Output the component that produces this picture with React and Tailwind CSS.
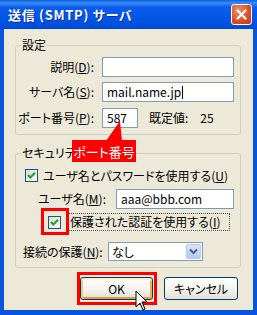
import React from "react";

const font = "font-['Noto_Sans_CJK_JP','Noto_Sans',sans-serif] [font-feature-settings:'palt']";

const Check = () => (
  <div className="w-[13px] h-[13px] border border-[#1C5180] bg-gradient-to-br from-[#DCDCD7] to-white flex items-center justify-center shrink-0">
    <svg width="11" height="11" viewBox="0 0 11 11">
      <polyline points="2,5 4.3,7.5 9,2.8" fill="none" stroke="#21A121" strokeWidth="2.2" />
    </svg>
  </div>
);

const Field = ({ className = "", children }) => (
  <div className={`h-[20px] border border-[#7F9DB9] bg-white px-[4px] flex items-center ${className}`}>
    {children}
  </div>
);

const Button = ({ children, isDefault, className = "" }) => (
  <div
    className={`h-[23px] rounded-[3px] border border-[#003C74] bg-gradient-to-b from-white via-[#F5F4EF] to-[#E3E1D6] flex items-center justify-center text-[12px] ${
      isDefault ? "shadow-[inset_0_2px_0_#FFF0CF,inset_2px_0_0_#F9C86A,inset_-2px_0_0_#F3B33F,inset_0_-2px_0_#E5973B]" : ""
    } ${className}`}
  >
    {children}
  </div>
);

export default function App() {
  return (
    <div className={`relative w-[257px] h-[315px] flex flex-col bg-[#0855DD] ${font} text-black`}>
      {/* Title bar */}
      <div className="h-[29px] flex items-center pl-[8px] pr-[5px] bg-[linear-gradient(to_bottom,#0A61E0_0%,#3A8BF6_10%,#0A5CEC_25%,#0055E5_70%,#0049D8_100%)]">
        <span className="text-white font-bold text-[13px] leading-none tracking-[0.7px] [text-shadow:1px_1px_0_#0A2AA0]">
          送信 (SMTP) サーバ
        </span>
        <div className="ml-auto w-[21px] h-[21px] rounded-[3px] border border-white bg-[radial-gradient(circle_at_35%_30%,#F0906A,#DD4A22_60%,#C23A18)] flex items-center justify-center">
          <svg width="11" height="11" viewBox="0 0 11 11">
            <path d="M1.5 1.5 L9.5 9.5 M9.5 1.5 L1.5 9.5" stroke="white" strokeWidth="2.2" strokeLinecap="square" />
          </svg>
        </div>
      </div>

      {/* Body */}
      <div className="flex-1 mx-[4px] mb-[5px] bg-[#ECE9D8] pt-[9px] px-[11px] text-[12px] leading-[14px]">
        {/* 設定 */}
        <fieldset className="w-[226px] border border-[#D0D0BF] rounded-[3px] pt-[5px] pb-[6px]">
          <legend className="ml-[5px] px-[1px] leading-[14px]">設定</legend>
          <div className="flex items-center h-[20px]">
            <div className="w-[78px] text-right">説明(<u>D</u>):</div>
            <Field className="ml-[8px] w-[132px]" />
          </div>
          <div className="flex items-center h-[20px] mt-[5px]">
            <div className="w-[78px] text-right">サーバ名(<u>S</u>):</div>
            <Field className="ml-[8px] w-[132px]">
              <span>mail.name.jp</span>
              <span className="w-[1px] h-[13px] bg-black ml-[1px]" />
            </Field>
          </div>
          <div className="flex items-center h-[20px] mt-[6px]">
            <div className="w-[78px] text-right">ポート番号(<u>P</u>):</div>
            <Field className="ml-[8px] w-[36px]">587</Field>
            <span className="ml-[11px]">既定値:</span>
            <span className="ml-[12px]">25</span>
          </div>
        </fieldset>

        {/* セキュリティ */}
        <fieldset className="w-[226px] mt-[11px] border border-[#D0D0BF] rounded-[3px] pt-[8px] pb-[6px]">
          <legend className="ml-[5px] px-[1px] leading-[14px]">セキュリティ</legend>
          <div className="flex items-center h-[15px] pl-[9px]">
            <Check />
            <span className="ml-[5px]">ユーザ名とパスワードを使用する(<u>U</u>)</span>
          </div>
          <div className="flex items-center h-[20px] mt-[6px]">
            <div className="w-[90px] text-right">ユーザ名(<u>M</u>):</div>
            <Field className="ml-[10px] w-[118px]">aaa@bbb.com</Field>
          </div>
          <div className="flex items-center h-[18px] mt-[4px] pl-[32px]">
            <Check />
            <div className="ml-[7px] w-[162px] h-[18px] border border-dotted border-[#555] flex items-center px-[1px]">
              保護された認証を使用する(<u>I</u>)
            </div>
          </div>
          <div className="flex items-center h-[19px] mt-[11px] pl-[7px]">
            <div className="w-[85px]">接続の保護(<u>N</u>):</div>
            <div className="w-[95px] h-[19px] border border-[#7F9DB9] bg-white flex items-center pl-[3px] pr-[1px]">
              <span>なし</span>
              <div className="ml-auto w-[15px] h-[15px] rounded-[2px] border border-[#B9CBF3] bg-gradient-to-b from-[#D9E5FD] to-[#B4C8F6] flex items-center justify-center">
                <svg width="9" height="7" viewBox="0 0 9 7">
                  <polyline points="1,1.5 4.5,5 8,1.5" fill="none" stroke="#4D6185" strokeWidth="2" />
                </svg>
              </div>
            </div>
          </div>
        </fieldset>

        {/* Buttons */}
        <div className="flex mt-[9px] pl-[65px]">
          <Button isDefault className="w-[73px]">OK</Button>
          <Button className="w-[74px] ml-[11px]">キャンセル</Button>
        </div>
      </div>

      {/* Callout: ポート番号 */}
      <svg className="absolute left-[105px] top-[121px]" width="18" height="20" viewBox="0 0 18 20">
        <polygon points="1,20 17,20 15,0" fill="#FF0000" />
      </svg>
      <div className="absolute left-[72px] top-[140px] w-[64px] h-[22px] bg-[#FF0000] text-white text-[13px] leading-none whitespace-nowrap flex items-center justify-center">
        ポート番号
      </div>

      {/* Highlight boxes */}
      <div className="absolute left-[41px] top-[208px] w-[28px] h-[27px] border-[3px] border-[#FF0000] shadow-[-1px_-1px_0_#D6E2F4]" />
      <div className="absolute left-[77px] top-[272px] w-[80px] h-[33px] border-[3px] border-[#FF0000]" />

      {/* Mouse cursor */}
      <svg className="absolute left-[135px] top-[290px]" width="13" height="21" viewBox="0 0 13 21">
        <path d="M1 1 L1 17 L5 13 L8 20 L10 19 L7 12 L12 12 Z" fill="white" stroke="black" strokeWidth="1" strokeLinejoin="miter" />
      </svg>
    </div>
  );
}
